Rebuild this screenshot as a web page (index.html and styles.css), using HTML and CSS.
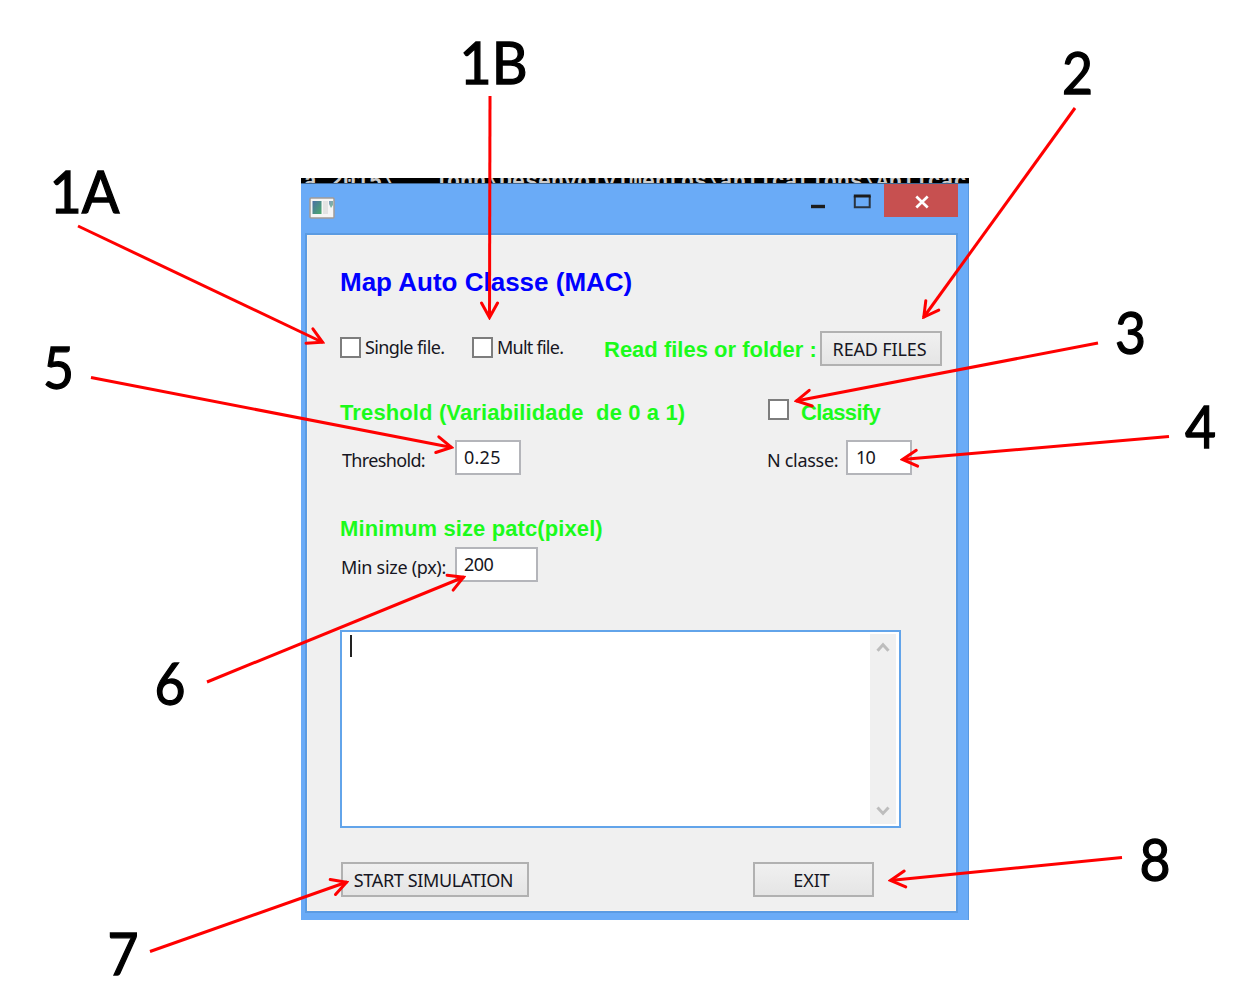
FILE: index.html
```html
<!DOCTYPE html>
<html lang="en">
<head>
<meta charset="utf-8">
<title>Map Auto Classe (MAC)</title>
<link rel="stylesheet" href="styles.css">
</head>
<body>
<main class="figure">
  <section class="window">
    <div class="console"><span>a 2015\   john\Desenvolvimentos\aplications\Aplicac</span></div>
    <header class="titlebar">
      <svg class="app-icon" width="26" height="22" viewBox="0 0 26 22">
        <defs><linearGradient id="pic" x1="0" y1="0" x2="1" y2="1"><stop offset="0" stop-color="#4a6fa5"/><stop offset="1" stop-color="#4cab6c"/></linearGradient></defs>
        <rect x="1" y="1" width="24" height="20" rx="1" fill="#f6f6f6" stroke="#a29c98" stroke-width="1.5"/>
        <rect x="3.5" y="4" width="9" height="13" fill="url(#pic)"/>
        <rect x="14" y="4" width="5" height="13" fill="#e3e3e3"/>
        <path d="M20 4h4v4l-2 3-2-4z" fill="url(#pic)" opacity=".7"/>
      </svg>
      <div class="controls">
        <svg class="sys" width="75" height="33" viewBox="0 0 75 33">
          <path d="M2 22.500h14" stroke="#1c1c1c" stroke-width="3.4"/>
          <path d="M45.8 12v11.2h14.900V12" fill="none" stroke="#2a3440" stroke-width="2"/>
          <path d="M44.8 12h16.900" stroke="#1c1c1c" stroke-width="3"/>
        </svg>
        <div class="close"><svg width="16" height="14" viewBox="0 0 16 14"><path d="M2.3 1.5l11.4 11M13.7 1.5l-11.4 11" stroke="#fff" stroke-width="2.7"/></svg></div>
      </div>
    </header>
    <div class="client">
      <h1 class="title">Map Auto Classe (MAC)</h1>
      <div class="row files">
        <i class="check"></i><span class="label up single">Single file.</span>
        <i class="check"></i><span class="label up mult">Mult file.</span>
        <span class="heading read">Read files or folder :</span>
        <div class="button"><span class="t-read">READ FILES</span></div>
      </div>
      <div class="row threshold-head">
        <span class="heading tresh">Treshold (Variabilidade&nbsp; de 0 a 1)</span>
        <i class="check"></i><span class="heading classify">Classify</span>
      </div>
      <div class="row values">
        <span class="label down t-thr">Threshold:</span><div class="field"><span class="t-025">0.25</span></div>
        <span class="label down t-n">N classe:</span><div class="field"><span class="t-10">10</span></div>
      </div>
      <div class="row size-head"><span class="heading minimum">Minimum size patc(pixel)</span></div>
      <div class="row size">
        <span class="label down t-min">Min size (px):</span><div class="field"><span class="t-200">200</span></div>
      </div>
      <div class="log">
        <i class="caret"></i>
        <div class="scroll">
          <svg width="14" height="12" viewBox="0 0 14 12"><path d="M1.5 9.7L7 3.8l5.500 5.900" fill="none" stroke="#bdbdbd" stroke-width="3"/></svg>
          <svg width="14" height="12" viewBox="0 0 14 12"><path d="M1.500 2.500L7 8.400l5.500-5.900" fill="none" stroke="#bdbdbd" stroke-width="3"/></svg>
        </div>
      </div>
      <div class="row actions">
        <div class="button"><span class="t-start">START SIMULATION</span></div>
        <div class="button"><span class="t-exit">EXIT</span></div>
      </div>
    </div>
  </section>
  <svg class="callouts" width="1258" height="1001" viewBox="0 0 1258 1001">
    <defs><marker id="tip" viewBox="-18 -10 20 20" markerWidth="20" markerHeight="20" markerUnits="userSpaceOnUse" orient="auto"><path d="M-15 -8L-.5 0L-15 8" fill="none" stroke="#f00" stroke-width="3" stroke-linecap="round"/></marker></defs>
    <g class="arrows">
      <path d="M78 226L323 342.500"/>
      <path d="M490 96L489.500 318"/>
      <path d="M1075 108L923.500 317.500"/>
      <path d="M1098 343L796 401"/>
      <path d="M1169 436.500L902 459.500"/>
      <path d="M91 377.500L452 447.500"/>
      <path d="M207 682L464 577"/>
      <path d="M150 951.500L347 882"/>
      <path d="M1122 857.500L890 880.500"/>
    </g>
    <g class="numbers">
      <text x="84.500" y="212.500" textLength="70" lengthAdjust="spacingAndGlyphs">1A</text>
      <text x="493.500" y="83.500" textLength="68" lengthAdjust="spacingAndGlyphs">1B</text>
      <text x="1077.500" y="93.500" textLength="31" lengthAdjust="spacingAndGlyphs">2</text>
      <text x="1130.500" y="353.500" textLength="31" lengthAdjust="spacingAndGlyphs">3</text>
      <text x="1200.500" y="448" textLength="31" lengthAdjust="spacingAndGlyphs">4</text>
      <text x="58.500" y="389" textLength="31" lengthAdjust="spacingAndGlyphs">5</text>
      <text x="170" y="705" textLength="31" lengthAdjust="spacingAndGlyphs">6</text>
      <text x="123" y="975" textLength="31" lengthAdjust="spacingAndGlyphs">7</text>
      <text x="1155" y="881" textLength="31" lengthAdjust="spacingAndGlyphs">8</text>
    </g>
  </svg>
</main>
</body>
</html>
```

FILE: styles.css
```css
* { box-sizing: border-box; }
body { margin: 0; background: #fff; }
.figure { position: relative; width: 1258px; height: 1001px; padding: 178px 0 0 301px; overflow: hidden; }
.window { width: 668px; height: 742px; background: #6aabf7; font: 18px/24px "Noto Sans", sans-serif; color: #161622; white-space: nowrap; border-right: 1px solid #5898e0; }
.console { width: 668px; height: 6px; background: #000; border-bottom: 1px solid #3f658f; overflow: hidden; color: #ccc; font: bold 21.67px/24px "Liberation Mono", monospace; white-space: pre; padding-left: 3px; }
.console span { display: block; margin-top: -7px; }
.titlebar { display: flex; justify-content: space-between; height: 49px; padding: 0 10px 0 8px; }
.app-icon { margin-top: 13px; }
.controls { display: flex; }
.sys { margin-right: 0; }
.close { width: 74px; height: 33px; background: #c75050; display: flex; align-items: center; justify-content: center; padding: 3px 0 0 1px; }
.client { width: 653px; height: 680px; margin-left: 4px; background: #f0f0f0; border: 2px solid #5b9be2; padding: 32px 0 0 33px; box-shadow: inset 0 0 0 1px #f8f4ef; }
.title { margin: 0; height: 30px; font: bold 26px/30px "Liberation Sans", Arial, sans-serif; color: #00f; }
.row { display: flex; align-items: center; }
.heading { font: bold 22px/24px "Liberation Sans", Arial, sans-serif; color: #1bfb1b; }
.check { flex: none; width: 21px; height: 21px; background: #fff; border: 2px solid #7d7d7d; }
.label.up { padding-bottom: 3px; }
.label.down { padding-top: 4px; }
.button { flex: none; height: 35px; display: flex; align-items: center; justify-content: center; border: 2px solid #b1b1b1; background: linear-gradient(#f0f0f0, #e5e5e5); }
.field { flex: none; width: 66px; height: 35px; border: 2px solid #b4b5ba; background: #fff; padding: 3px 0 0 7px; }
.files { height: 35px; margin-top: 34px; }
.files .check { margin-bottom: 2px; }
.single { width: 111px; padding-left: 4px; letter-spacing: -0.6px; }
.mult { width: 111px; padding-left: 4px; letter-spacing: -0.75px; }
.read { width: 216px; padding-top: 3px; }
.files .button { width: 122px; }
.t-read { letter-spacing: -0.15px; margin-right: 3px; }
.threshold-head { height: 22px; margin-top: 33px; }
.threshold-head .check { margin-bottom: 1px; }
.tresh { width: 428px; padding-top: 6px; letter-spacing: 0.12px; }
.classify { padding: 6px 0 0 12px; letter-spacing: -0.65px; }
.values { height: 35px; margin-top: 19px; }
.t-thr, .t-min { width: 115px; padding-left: 2px; letter-spacing: -0.65px; }
.t-min { letter-spacing: -0.3px; padding-left: 1px; }
.t-n { width: 325px; padding-left: 246px; letter-spacing: -0.3px; }
.t-10 { padding-left: 1px; letter-spacing: -0.8px; }
.t-025 { letter-spacing: 0.25px; }
.t-200 { letter-spacing: -0.6px; }
.size-head { height: 22px; margin-top: 43px; }
.minimum { letter-spacing: 0.1px; }
.size { height: 35px; margin-top: 7px; }
.size .field { width: 83px; }
.log { display: flex; justify-content: space-between; width: 561px; height: 198px; margin-top: 48px; padding: 2px 3px 2px 8px; border: 2px solid #62a4ea; background: #fff; }
.caret { width: 2px; height: 22px; margin-top: 1px; background: #222; }
.scroll { width: 26px; background: #f0f0f0; display: flex; flex-direction: column; align-items: center; justify-content: space-between; padding: 7px 0; }
.actions { height: 35px; margin-top: 34px; padding-left: 1px; gap: 224px; }
.actions .button { width: 188px; }
.actions .button + .button { width: 121px; }
.t-start { letter-spacing: -0.35px; margin-right: 3px; }
.t-exit { letter-spacing: -0.1px; margin-right: 4px; }
.callouts { position: absolute; left: 0; top: 0; }
.arrows path { fill: none; stroke: #f00; stroke-width: 3; marker-end: url(#tip); }
.numbers { font: 58px Lato, sans-serif; fill: #000; stroke: #000; stroke-width: 1.3px; text-anchor: middle; }
```
